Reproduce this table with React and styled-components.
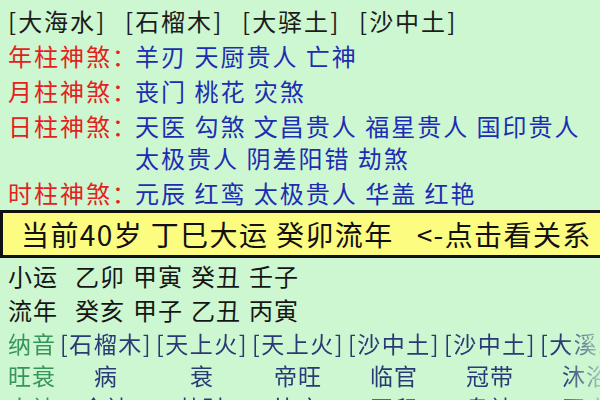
import React from "react";
import styled, { createGlobalStyle } from "styled-components";

const NAYIN = ["大海水", "石榴木", "大驿土", "沙中土"];

const SHENSHA = [
  { label: "年柱神煞：", items: ["羊刃", "天厨贵人", "亡神"] },
  { label: "月柱神煞：", items: ["丧门", "桃花", "灾煞"] },
  {
    label: "日柱神煞：",
    items: ["天医", "勾煞", "文昌贵人", "福星贵人", "国印贵人", "太极贵人", "阴差阳错", "劫煞"],
  },
  { label: "时柱神煞：", items: ["元辰", "红鸾", "太极贵人", "华盖", "红艳"] },
];

const FLOWS = [
  { label: "小运", items: ["乙卯", "甲寅", "癸丑", "壬子"] },
  { label: "流年", items: ["癸亥", "甲子", "乙丑", "丙寅"] },
];

const TABLE = [
  { label: "纳音", cells: ["[石榴木]", "[天上火]", "[天上火]", "[沙中土]", "[沙中土]", "[大溪水]"] },
  { label: "旺衰", cells: ["病", "衰", "帝旺", "临官", "冠带", "沐浴"] },
  { label: "十神", cells: ["食神", "劫财", "比肩", "正印", "枭神", "正官"] },
];

function App() {
  return (
    <Page>
      <GlobalStyle />
      <Top>
        <NayinBar>
          {NAYIN.map((n) => (
            <Bracket key={n}>[{n}]</Bracket>
          ))}
        </NayinBar>
        {SHENSHA.map((row) => (
          <ShenshaRow key={row.label}>
            <ShenshaLabel>{row.label}</ShenshaLabel>
            <ShenshaValues>{row.items.join(" ")}</ShenshaValues>
          </ShenshaRow>
        ))}
      </Top>

      <Banner>当前40岁 丁巳大运 癸卯流年&nbsp;&nbsp;&nbsp;&lt;-点击看关系</Banner>

      <Bottom>
        {FLOWS.map((row) => (
          <FlowRow key={row.label}>
            <FlowLabel>{row.label}</FlowLabel>
            {row.items.map((it) => (
              <FlowItem key={it}>{it}</FlowItem>
            ))}
          </FlowRow>
        ))}
        <Table>
          {TABLE.map((row) => (
            <TableRow key={row.label}>
              <TableLabel>{row.label}</TableLabel>
              {row.cells.map((c, i) => (
                <Cell key={i} $bracket={c.startsWith("[")}>
                  {c}
                </Cell>
              ))}
            </TableRow>
          ))}
        </Table>
      </Bottom>
    </Page>
  );
}

const GlobalStyle = createGlobalStyle`
  html, body {
    margin: 0;
    padding: 0;
    background: #cdf7d0;
  }
  body {
    font-family: "Noto Sans CJK SC", "Noto Sans", sans-serif;
  }
`;

const Page = styled.div`
  width: 600px;
  height: 400px;
  overflow: hidden;
  background: #cdf7d0;
`;

const Top = styled.div`
  display: flex;
  flex-direction: column;
  gap: 3px;
  padding: 5px 8px 0;
`;

const NayinBar = styled.div`
  display: grid;
  grid-template-columns: repeat(4, 117px);
  line-height: 32px;
`;

const Bracket = styled.span`
  font-size: 24px;
  letter-spacing: 2px;
  color: #1c1c1c;
`;

const ShenshaRow = styled.div`
  display: grid;
  grid-template-columns: 127px 1fr;
  line-height: 32px;
  font-size: 24px;
  letter-spacing: 2px;
`;

const ShenshaLabel = styled.span`
  color: #e4211d;
  white-space: nowrap;
`;

const ShenshaValues = styled.span`
  color: #1d2db3;
  word-break: keep-all;
`;

const Banner = styled.div`
  margin-top: 1px;
  height: 42px;
  line-height: 42px;
  padding-left: 18px;
  background: #fcfc80;
  border: 3px solid #111;
  border-right: none;
  font-size: 28px;
  letter-spacing: 1.4px;
  color: #111;
  white-space: nowrap;
`;

const Bottom = styled.div`
  padding: 1px 0 0 8px;
`;

const FlowRow = styled.div`
  display: flex;
  gap: 8px;
  line-height: 34px;
  font-size: 24px;
  letter-spacing: 1px;
  color: #161616;
`;

const FlowLabel = styled.span`
  width: 59px;
`;

const FlowItem = styled.span``;

const Table = styled.div`
  mask-image: linear-gradient(to right, #000 555px, rgba(0, 0, 0, 0.25) 592px);
  -webkit-mask-image: linear-gradient(to right, #000 555px, rgba(0, 0, 0, 0.25) 592px);
`;

const TableRow = styled.div`
  display: grid;
  grid-template-columns: 50px repeat(6, 96px);
  line-height: 32px;
  font-size: 23px;
  white-space: nowrap;
`;

const TableLabel = styled.span`
  color: #37955a;
  letter-spacing: 1px;
`;

const Cell = styled.span`
  text-align: center;
  color: #2a3a76;
  letter-spacing: ${(p) => (p.$bracket ? "1.5px" : "1px")};
`;

export default App;
